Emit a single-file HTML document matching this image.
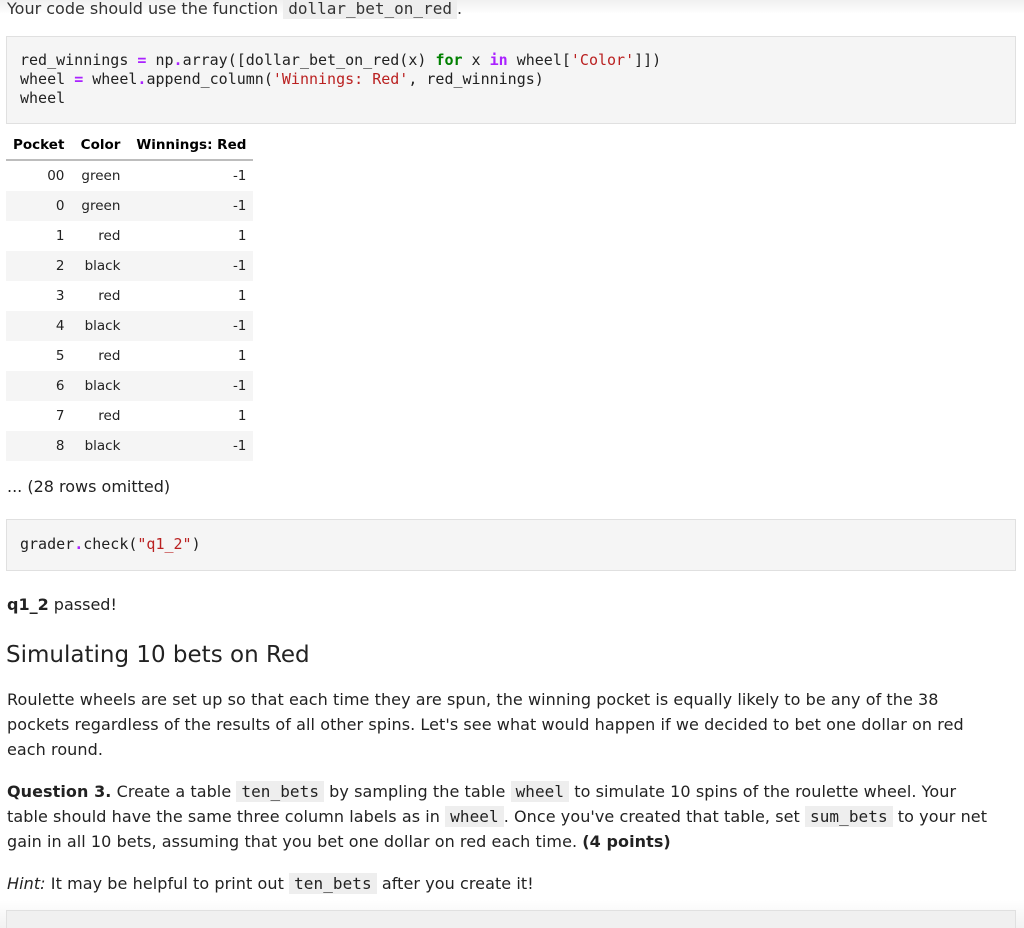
<!DOCTYPE html>
<html><head><meta charset="utf-8"><style>
html,body{margin:0;width:1024px;height:928px;overflow:hidden}
body{background:#fff;font-family:"DejaVu Sans","Liberation Sans",sans-serif;color:#000;position:relative;font-size:16px}
.a{position:absolute;white-space:nowrap}
code,.m{font-family:"DejaVu Sans Mono","Liberation Mono",monospace}
code{background:#eee;padding:1px 5px;font-size:16px}
.box{position:absolute;left:6px;width:1008px;background:#f5f5f5;border:1px solid #e0e0e0}
.m{font-size:15px;line-height:19px;color:#212121}
.k{color:#008000;font-weight:bold}.o{color:#aa22ff;font-weight:bold}.s{color:#ba2121}
table{position:absolute;left:6px;top:130px;border-collapse:collapse;font-size:13.5px;color:#222}
th{font-weight:bold;text-align:right;padding:0 7px;height:29px;border-bottom:2px solid #bdbdbd;color:#000}
td{height:30px;padding:0 7px;text-align:right}
tr.g td{background:#f5f5f5}
td:nth-child(1){width:46px}td:nth-child(2){width:42px}td:nth-child(3){width:112px}
.p{letter-spacing:0.07px}
</style></head><body>
<div style="position:absolute;left:0;top:0;width:1024px;height:14px;background:linear-gradient(#f0f0f0,#fff)"></div>
<div class="a" style="left:7px;top:-1px;color:#333;">Your code should use the function <code>dollar_bet_on_red</code>.</div>
<div class="box" style="top:36px;height:86px"><div class="m a" style="left:13px;top:14px">red_winnings <span class="o">=</span> np<span class="o">.</span>array([dollar_bet_on_red(x) <span class="k">for</span> x <span class="o">in</span> wheel[<span class="s">'Color'</span>]])<br>wheel <span class="o">=</span> wheel<span class="o">.</span>append_column(<span class="s">'Winnings: Red'</span>, red_winnings)<br>wheel</div></div>
<table>
<tr><th>Pocket</th><th>Color</th><th>Winnings: Red</th></tr>
<tr><td>00</td><td>green</td><td>-1</td></tr>
<tr class="g"><td>0</td><td>green</td><td>-1</td></tr>
<tr><td>1</td><td>red</td><td>1</td></tr>
<tr class="g"><td>2</td><td>black</td><td>-1</td></tr>
<tr><td>3</td><td>red</td><td>1</td></tr>
<tr class="g"><td>4</td><td>black</td><td>-1</td></tr>
<tr><td>5</td><td>red</td><td>1</td></tr>
<tr class="g"><td>6</td><td>black</td><td>-1</td></tr>
<tr><td>7</td><td>red</td><td>1</td></tr>
<tr class="g"><td>8</td><td>black</td><td>-1</td></tr>
</table>
<div class="a" style="left:7px;top:477px;color:#222">... (28 rows omitted)</div>
<div class="box" style="top:519px;height:50px"><div class="m a" style="left:13px;top:15px">grader<span class="o">.</span>check(<span class="s">"q1_2"</span>)</div></div>
<div class="a" style="left:7px;top:595px;color:#222"><b>q1_2</b> passed!</div>
<div class="a" style="left:6px;top:642px;font-size:23px;color:#222">Simulating 10 bets on Red</div>
<div class="a p" style="left:7px;top:687px;line-height:25px;color:#222">Roulette wheels are set up so that each time they are spun, the winning pocket is equally likely to be any of the 38<br>pockets regardless of the results of all other spins. Let's see what would happen if we decided to bet one dollar on red<br>each round.</div>
<div class="a p" style="left:7px;top:779px;line-height:25px;color:#222"><b>Question 3.</b> Create a table <code>ten_bets</code> by sampling the table <code>wheel</code> to simulate 10 spins of the roulette wheel. Your<br>table should have the same three column labels as in <code>wheel</code>. Once you've created that table, set <code>sum_bets</code> to your net<br>gain in all 10 bets, assuming that you bet one dollar on red each time. <b>(4 points)</b></div>
<div class="a p" style="left:7px;top:871px;line-height:25px;color:#222"><i>Hint:</i> It may be helpful to print out <code>ten_bets</code> after you create it!</div>
<div style="position:absolute;left:0;top:900px;width:1024px;height:28px;background:linear-gradient(#fff,#f2f2f2)"></div>
<div class="box" style="top:910px;height:20px;background:#f0f0f0"></div>
</body></html>
